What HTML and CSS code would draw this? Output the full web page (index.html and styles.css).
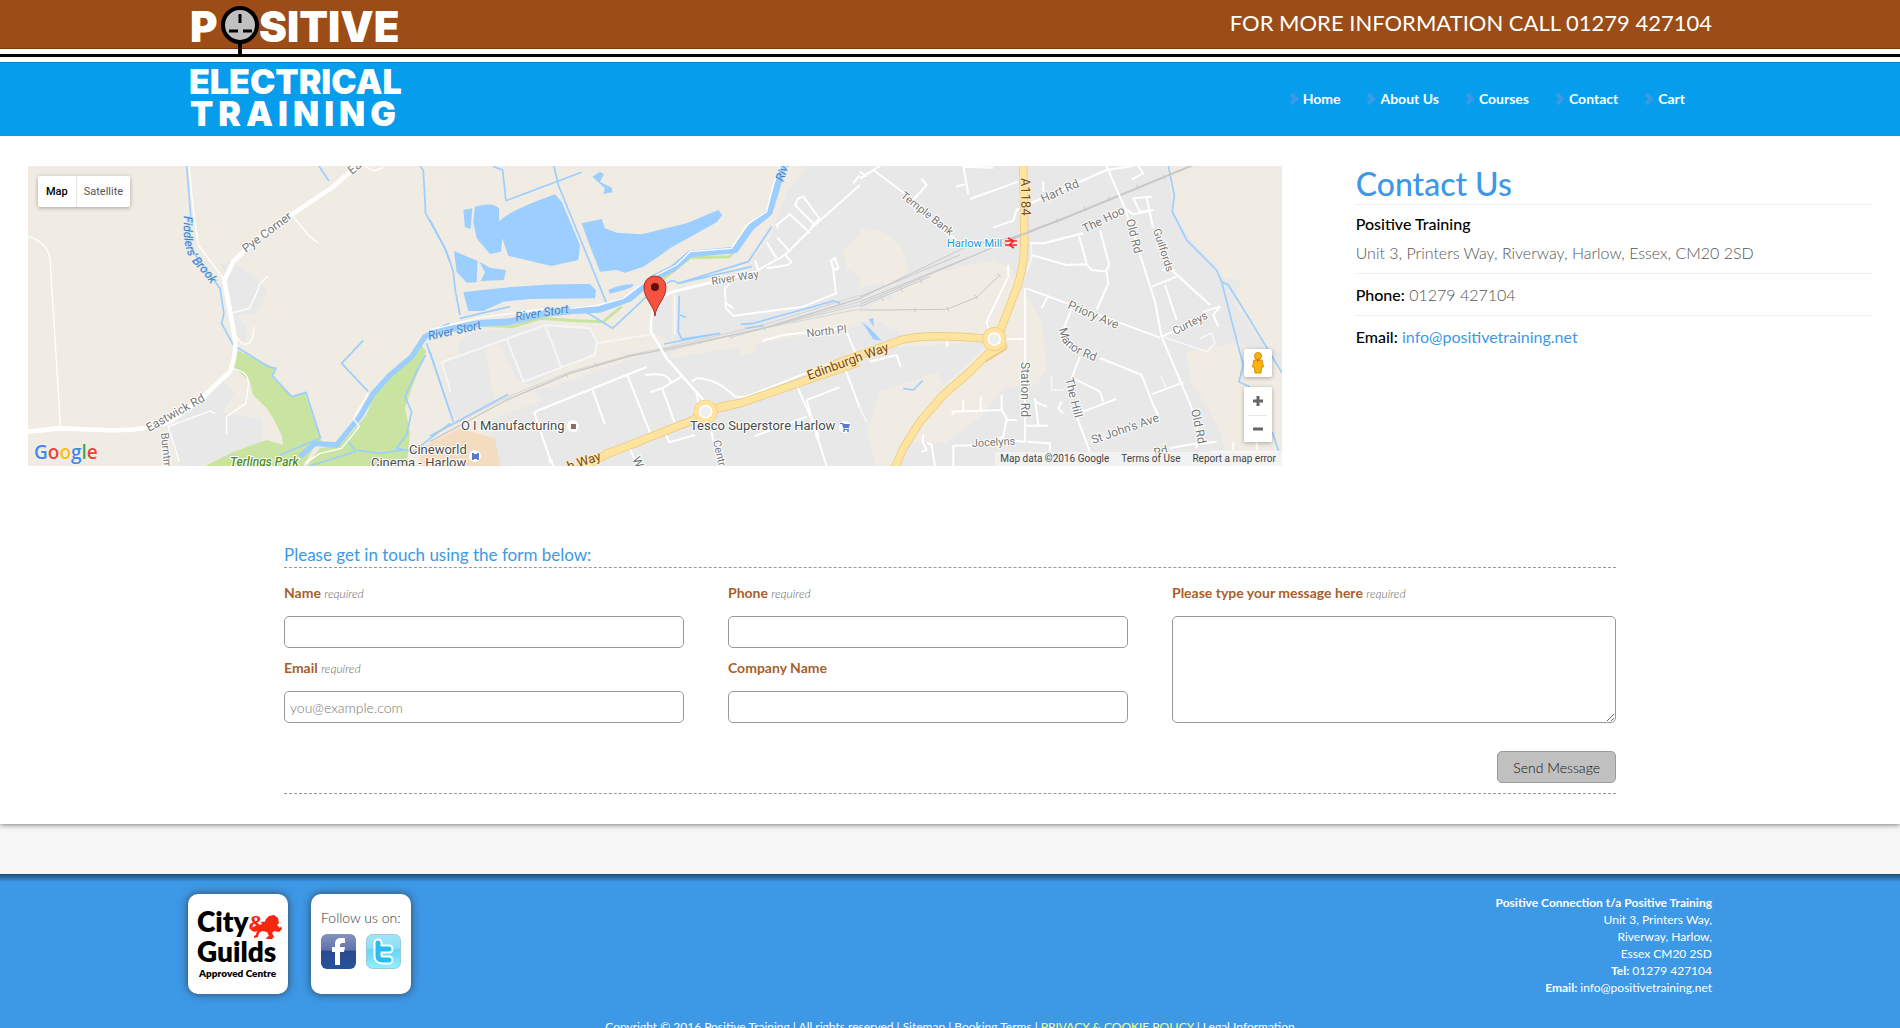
FILE: index.html
```html
<!DOCTYPE html>
<html lang="en">
<head>
<meta charset="utf-8">
<title>Contact Us | Positive Electrical Training</title>
<link rel="stylesheet" href="styles.css">
</head>
<body>
<header class="header">
  <div class="wrap header-inner">
    <a class="logo" href="#" aria-label="Positive Electrical Training">
      <svg width="220" height="136" viewBox="0 0 220 136">
        <g class="logo-text">
          <text x="2" y="42" font-size="42">P</text>
          <text x="71" y="42" font-size="42">SITIVE</text>
          <text x="1" y="94" font-size="34">ELECTRICAL</text>
          <text x="2" y="126" font-size="34" class="logo-spaced">TRAINING</text>
        </g>
        <path d="M52 40V56" stroke="#000" stroke-width="4"/>
        <circle cx="52" cy="25" r="17" fill="#c0c0c0" stroke="#000" stroke-width="4"/>
        <path d="M52 14v9M41 31h9M55 31h9" stroke="#000" stroke-width="3"/>
      </svg>
    </a>
    <div class="header-side">
      <p class="call">FOR MORE INFORMATION CALL 01279 427104</p>
      <nav class="nav">
        <a href="#"><svg class="chev" viewBox="0 0 10 14"><path d="M2 2l5 5-5 5"/></svg>Home</a>
        <a href="#"><svg class="chev" viewBox="0 0 10 14"><path d="M2 2l5 5-5 5"/></svg>About Us</a>
        <a href="#"><svg class="chev" viewBox="0 0 10 14"><path d="M2 2l5 5-5 5"/></svg>Courses</a>
        <a href="#"><svg class="chev" viewBox="0 0 10 14"><path d="M2 2l5 5-5 5"/></svg>Contact</a>
        <a href="#"><svg class="chev" viewBox="0 0 10 14"><path d="M2 2l5 5-5 5"/></svg>Cart</a>
      </nav>
    </div>
  </div>
</header>

<main class="main">
  <div class="top">
    <div class="map">
      <svg class="map-art" viewBox="0 0 1254 300" preserveAspectRatio="xMidYMid slice" aria-label="Map of Harlow">
        <rect width="1254" height="300" fill="#f0ece3"/>
        <defs>
          <path id="p-brook" d="M156 50C155 75 157 88 168 100C178 110 184 118 190 132"/>
          <path id="p-manor" d="M1031 163C1034 180 1040 186 1072 197"/>
        </defs>
        <!-- west -->
        <g transform="translate(-8 -11) scale(.333333)" fill="none" stroke-linejoin="round">
          <path fill="#e8e8e8" d="M605 330L625 318 700 360 745 410 705 480 650 480 680 520 680 560 650 560 640 480ZM450 815L550 740 610 675 645 712 610 770 700 790 725 790 730 860 640 890 540 933H480L450 850Z"/>
          <path fill="#c9e3a0" d="M650 585L765 640 755 665 815 725 855 715 905 860 880 880 850 933H555L640 890 740 855 790 870 785 840 760 790 740 760 700 720 690 680 635 630ZM860 933L900 880 960 870 1040 780 1070 700 1170 610 1205 570 1218 590 1175 700 1155 760 1170 830 1160 933Z"/>
          <path fill="#f3dcc0" d="M1225 900L1290 850V933H1210Z"/>
          <g stroke="#9cceff" stroke-width="5">
            <path d="M500 33L512 180 500 260 540 320 600 400 612 475 605 505 640 570 745 635 768 640 757 662 815 725 858 712 902 850M897 33L927 78M1200 33L1210 45 1217 175 1270 270 1290 320M1030 556L965 625 1045 710M1220 565L1290 770M1217 600L1185 660 1155 725 1175 770 1160 840 1130 880 1180 890 1290 805M780 900L900 850M985 860L1005 885 1080 895 1150 885M870 933L1005 890"/>
            <path stroke-width="16" d="M1290 510L1215 545 1175 605 1110 660 1060 715 1020 785 950 870 885 865 840 905"/>
          </g>
          <g stroke="#fff" stroke-width="4">
            <path d="M507 33L522 180 535 270 610 370M820 185L865 240 893 263M24 245Q80 260 90 310L122 820M640 473L688 460 712 410 718 388 745 362M650 545L665 565Q700 580 702 515M635 640Q690 650 685 690L678 745 620 785 620 838M445 815L570 768 585 775M445 815L478 920M1035 33L1060 48 1090 38M1290 610L1265 625 1285 700M1045 715L1000 790 1018 815 965 880 900 895 855 925" />
            <path stroke-width="14" d="M1010 33L940 95 820 175 700 260 640 320 613 375 645 550Q650 600 630 650L550 725 450 800Q370 830 250 825L120 820 24 830"/>
          </g>
        </g>
        <!-- centre -->
        <g transform="translate(402 -11) scale(.333333)" fill="none" stroke-linejoin="round">
          <path fill="#e8e8e8" d="M1135 33H1300V933H210L185 860 190 790 340 735 310 710 410 680 640 600 730 570 740 400 960 350 970 310 1020 250 1070 110ZM30 625L90 600 85 560 130 535 350 505 480 520 505 570 480 600 100 790 70 790ZM725 415L665 470 665 530 725 560Z"/>
          <path fill="#f0ece3" d="M165 580L205 568 265 680 310 690 195 745ZM1300 220L1240 290 1250 340 1300 370ZM920 560L970 550 980 590 935 600ZM740 570L900 545 1300 450V510L900 580 720 610Z"/>
          <path fill="#f3dcc0" d="M-30 933V880L90 820 195 850 210 933Z"/>
          <path stroke="#c9e3a0" stroke-width="9" d="M130 510L250 515 330 490 440 497 520 500 575 455M700 372L780 308 900 305 960 220 1020 170 1050 60"/>
          <g fill="#9cceff">
            <path d="M100 165L127 160 122 222 105 217ZM135 155Q190 140 207 160L208 200Q230 170 375 118L395 140 450 270 445 315 365 333 235 302 217 250 213 290 180 297 140 250 130 200ZM72 288L143 318 140 382 110 383 80 350ZM148 320L180 338 228 345 222 375 152 378 165 352ZM100 412Q300 385 480 387L498 405 495 430 300 432 220 440 160 468 115 468ZM455 205L515 192 525 220 560 233 635 238 770 205 865 165 877 180 860 202 720 280 700 295 640 335 585 353 560 345 510 350 475 260ZM487 65L510 50 522 58 510 80 545 98 548 112 520 117 525 100ZM535 405Q570 388 610 388 615 400 540 416Z"/>
          </g>
          <g stroke="#9cceff" stroke-width="5">
            <path d="M190 35L218 45 228 137 455 52M372 33L385 90 530 445M0 195L50 290 70 350 75 400 90 480M0 590L70 800M0 843L235 718M90 490L240 455M450 460L548 520 650 425M710 385Q730 370 745 385L955 320 1025 215M745 385L965 335M748 422L745 530 755 552 870 535M750 480L768 487M702 567L860 537M932 508L970 505 1210 438 1230 445M945 520L1000 512"/>
            <path stroke-width="20" d="M1060 33L1040 100 1018 172 965 215 915 285 780 297 730 340 670 370 600 430 510 463 430 467 350 475 240 500 150 505 0 535"/>
          </g>
          <path stroke="#fff" stroke-width="4" d="M1050 33L1030 90 1010 170 950 210 905 280 780 290 740 330 660 370 580 430 500 452 420 460M0 525L150 488 340 462"/>
          <g stroke="#c8c8c8">
            <path stroke-width="4" d="M0 860L230 735 420 655 600 603 720 580 1000 520 1290 430"/>
            <path stroke-width="2" d="M0 845L230 727 420 650 600 600 720 575 1000 510 1290 420M700 590L1290 450M900 548L1290 440M1000 520L1290 462M226 727l8 14M318 690l6 12M405 655l8 13M494 624l8 13M588 597l8 12M684 575l8 12M805 556l6 12M900 540l6 12M1000 515l6 12"/>
          </g>
          <g stroke="#f6f6f6" stroke-width="6"><path d="M62 710L35 622 345 510 480 520 500 560 495 600 280 680 230 550M345 510L393 635M500 565L665 538M735 420V540"/></g>
          <g stroke="#fff" stroke-width="6">
            <path d="M370 933L360 910 313 775 320 768 650 636M488 705L525 808M592 660L665 845M645 660Q720 650 722 685M660 712L700 698 755 665M697 700L738 815M785 680L800 670Q860 670 915 725L950 725 1290 590M800 710L805 745M708 840L718 862 795 840M600 880L620 930M845 830L850 860M1098 685L1165 840M1130 735L1228 697M1130 735L1162 845 1190 933M975 843L1130 785M998 557L1060 540 1245 520 1275 590M1290 90L1155 210 1065 300 985 345M975 315L985 345M1155 210L1095 150 1105 130 1120 125 1168 190 1145 215M1065 300L1085 320 1075 330 1010 340M1045 220L1040 210 1080 178 1140 235M1010 262L1040 310M1042 248L1080 290M910 460L890 445M1225 345L1210 340 1203 318 1215 308 1225 340 1210 345 1218 415 1120 455 910 482 888 460 885 400 900 385M1245 640L1290 760M1290 60L1270 85"/>
            <path stroke-width="8" d="M980 350L720 412 680 440Q660 480 663 530L710 610 825 740"/>
          </g>
          <circle cx="362" cy="918" r="7" fill="#fff"/><circle cx="1162" cy="843" r="7" fill="#fff"/>
          <g stroke-linecap="round">
            <path stroke="#ebcb85" stroke-width="25" d="M440 945L530 898 620 862 790 795 820 770 930 745 1140 672 1350 600M530 895L625 862M800 800L870 755 925 745"/>
            <path stroke="#ffe4a0" stroke-width="20" d="M440 945L530 898 620 862 790 795 820 770 930 745 1140 672 1350 600M530 895L625 862M800 800L870 755 925 745"/>
          </g>
          <circle cx="827" cy="770" r="24" stroke="#ebcb85" stroke-width="24"/>
          <circle cx="827" cy="770" r="24" stroke="#ffe4a0" stroke-width="20"/>
          <circle cx="827" cy="770" r="18" fill="#eee" stroke="#fff" stroke-width="5"/>
        </g>
        <!-- east -->
        <g transform="translate(832 -11) scale(.333333)" fill="none" stroke-linejoin="round">
          <path fill="#e8e8e8" d="M0 33H1270V933H0Z"/>
          <path fill="#f0ece3" d="M920 33H1270V600L1200 560 1120 440 1145 375 1080 370 1060 330 990 250 940 170ZM980 590L1140 560 1270 640V933H1110L1080 830 1040 750 990 680ZM0 220Q130 220 145 350L60 400 0 420ZM0 470L200 360 400 315 450 340 500 420 545 500 560 640 530 690 430 700 370 780 300 830 260 865 130 860 90 933H50L20 830 60 710 230 650 250 690 350 600 380 560 60 580 0 540Z"/>
          <path fill="#e8e8e8" d="M0 430L100 435 70 380 0 400ZM0 500L60 500 130 540 60 580 0 570Z"/>
          <g stroke="#9cceff" stroke-width="5">
            <path d="M925 33L943 120 937 170 980 255 1070 345 1085 380 1135 575 1150 630 1137 680 1170 695M1085 380L1105 390 1155 470 1270 660M1237 830L1260 900M130 700L160 705 188 677"/>
            <path fill="#9cceff" stroke="none" d="M5 500L30 520 65 557 40 553ZM25 492L40 490 42 515Z"/>
          </g>
          <g stroke="#c8c8c8" stroke-width="3">
            <path d="M0 430L330 270 470 245M0 440L480 245M0 448L380 285M0 455L210 365M0 425L300 300M0 465L70 465 260 463 350 427 420 360M60 420l10 18M120 395l8 16M180 372l6 14M165 458v14M260 455l6 14M345 420l8 12M412 356l12 10M588 190l6 14M672 154l6 14M745 125l6 14M830 90l6 14M910 58l6 14"/>
            <path stroke-width="6" d="M455 250L600 195 1000 30"/>
          </g>
          <g stroke="#fff" stroke-width="6">
            <path d="M0 70L60 33M40 45L140 120M0 50L20 65M260 235L290 255M155 140L200 90 185 72M310 33L325 118M288 95L315 88M310 35L400 38M330 132L475 80M550 110L550 80M400 217L460 197 470 165 500 150 740 45 820 33M740 33L795 160 850 330 885 440 905 545 1000 770 1015 840 1010 880M815 73L850 55 835 33M875 125L820 130 840 170 880 165M860 130L880 220M880 165L820 178 795 160M905 345L945 345M935 345L1050 450M875 395L950 365M915 390L950 495M1030 470L1080 455 1060 480 1075 515M905 545L1030 490M500 400L900 548M565 420L545 460M510 265L550 265 670 235M515 300L620 330 680 328 695 345 740 350 745 385 710 465M655 235L680 325M720 225L748 330 735 352M495 400V860M440 552H490M635 460L610 525M660 605L635 670M720 610L760 625 845 660 880 750 895 780M875 718L970 682M640 670L720 710 730 740M655 775L768 732M605 740L595 760 610 775M650 785L690 890M695 860L740 850M445 330V365L380 500 385 520M262 550V575M30 620L110 600 122 635M310 735V770M362 725V770M278 780L278 770 425 765 440 790 430 845 385 870 280 872 280 933M425 720V765M440 795H470M525 730L535 810M525 740L560 755M495 812L565 812M495 860L465 858M190 840L188 860 200 885 185 890M200 862L215 870 225 933M980 870L1070 860M930 880L980 870M1120 860V885M1190 860V885M500 860L570 865V890"/>
          </g>
          <g stroke="#f7f7f7" stroke-width="5"><path d="M910 545L1040 590 1065 565 1055 535 1020 550M900 660L920 700M575 665V705L610 705M0 760L20 800M515 265V310L500 350M1050 890L1260 890"/></g>
          <g stroke-linecap="round">
            <path stroke="#ebcb85" stroke-width="25" d="M490 20L493 250Q495 330 470 400L420 530M-70 625L120 556Q190 535 370 550M390 590L330 650 250 720 180 800 130 880 100 950M375 610L430 575"/>
            <path stroke="#ffe4a0" stroke-width="20" d="M490 20L493 250Q495 330 470 400L420 530M-70 625L120 556Q190 535 370 550M390 590L330 650 250 720 180 800 130 880 100 950M375 605L428 573"/>
          </g>
          <circle cx="403" cy="552" r="24" stroke="#ebcb85" stroke-width="24"/>
          <circle cx="403" cy="552" r="24" stroke="#ffe4a0" stroke-width="20"/>
          <circle cx="403" cy="552" r="18" fill="#eee" stroke="#fff" stroke-width="5"/>
          <path stroke="#c8c8c8" stroke-width="6" d="M455 250L520 227"/>
        </g>
        <g class="lbl">
          <text class="water"><textPath href="#p-brook">Fiddlers' Brook</textPath></text>
          <text class="water" transform="translate(401 174) rotate(-12)">River Stort</text>
          <text class="water" transform="translate(488 155) rotate(-9)">River Stort</text>
          <text class="water" transform="translate(755 16) rotate(-70)">River</text>
          <text transform="translate(218 87) rotate(-37)">Pye Corner</text>
          <text transform="translate(324 9) rotate(-40)">East</text>
          <text transform="translate(121 266) rotate(-29)">Eastwick Rd</text>
          <text class="small" transform="translate(133 267) rotate(85)">Burntmill</text>
          <text class="park" x="202" y="300">Terlings Park</text>
          <text class="small" transform="translate(684 119) rotate(-9)">River Way</text>
          <text class="small" transform="translate(779 171) rotate(-6)">North Pl</text>
          <text transform="translate(604 293) rotate(65)">West</text>
          <text class="small" transform="translate(685 275) rotate(77)">Central</text>
          <text class="small" transform="translate(872 31) rotate(38)">Temple Bank</text>
          <text transform="translate(1015 37) rotate(-24)">Hart Rd</text>
          <text transform="translate(1057 67) rotate(-26)">The Hoo</text>
          <text transform="translate(1098 54) rotate(76)">Old Rd</text>
          <text class="small" transform="translate(1125 64) rotate(72)">Guilfords</text>
          <text transform="translate(1039 142) rotate(23)">Priory Ave</text>
          <text><textPath href="#p-manor">Manor Rd</textPath></text>
          <text class="small" transform="translate(1147 169) rotate(-27)">Curteys</text>
          <text transform="translate(993 196) rotate(90)">Station Rd</text>
          <text transform="translate(1037 213) rotate(76)">The Hill</text>
          <text transform="translate(1065 278) rotate(-19)">St John's Ave</text>
          <text transform="translate(1163 244) rotate(78)">Old Rd</text>
          <text class="small" transform="translate(944 281) rotate(-3)">Jocelyns</text>
          <text transform="translate(1127 291) rotate(-15)">Rd</text>
          <text class="main-road" transform="translate(781 214) rotate(-20)">Edinburgh Way</text>
          <text class="main-road" transform="translate(541 305) rotate(-19)">h Way</text>
          <text class="main-road" transform="translate(993 12) rotate(89)">A1184</text>
          <text class="rail" x="919" y="81">Harlow Mill</text>
          <text class="poi" x="433" y="264">O I Manufacturing</text>
          <text class="poi" x="662" y="264">Tesco Superstore Harlow</text>
          <text class="poi" x="381" y="288">Cineworld</text>
          <text class="poi" x="343" y="301">Cinema - Harlow</text>
        </g>
        <g fill="#fff"><circle cx="545" cy="260" r="6"/><circle cx="817" cy="261" r="6"/><circle cx="447" cy="290" r="6"/></g>
        <path fill="#8d6e63" d="M543 258h5v5h-5z"/>
        <path fill="#5b7bd0" d="M812 257h3l1 1h6l-1 4h-5l1 1h4v1h-5l-2-6h-2z"/><circle cx="816" cy="265" r="1" fill="#5b7bd0"/><circle cx="820" cy="265" r="1" fill="#5b7bd0"/>
        <path fill="#5b7bd0" d="M444 287h2v1h3v-1h2v7h-2v-1h-3v1h-2z"/>
        <path fill="none" stroke="#f22" stroke-width="1.5" d="M977 75h12M977 79h12M980 72l6 3-5 4 5 3"/>
        <!-- marker -->
        <path d="M627 150C626 139 616 133 616 121A11 11 0 0 1 638 121C638 133 628 139 627 150Z" fill="#f5523f" stroke="#a83226"/>
        <circle cx="627" cy="121" r="4" fill="#5c0f0b"/>
      </svg>
      <div class="map-types"><button type="button" class="on">Map</button><button type="button">Satellite</button></div>
      <div class="google" aria-label="Google"><span class="b">G</span><span class="r">o</span><span class="y">o</span><span class="b">g</span><span class="g">l</span><span class="r">e</span></div>
      <div class="map-tools">
        <button type="button" class="tool" aria-label="Street View">
          <svg width="14" height="22" viewBox="0 0 14 22"><circle cx="7" cy="4" r="3.5" fill="#fbb40a" stroke="#d98d0b"/><path d="M3 8h8l1.500 7h-2l-.5 6H4l-.5-6h-2z" fill="#fbb40a" stroke="#d98d0b"/><path d="M5 7.500h4L7 10z" fill="#e0661a"/></svg>
        </button>
        <div class="zoom">
          <button type="button" aria-label="Zoom in"><svg width="12" height="12" viewBox="0 0 12 12"><path d="M1 6h10M6 1v10"/></svg></button>
          <button type="button" aria-label="Zoom out"><svg width="12" height="12" viewBox="0 0 12 12"><path d="M1 6h10"/></svg></button>
        </div>
      </div>
      <div class="map-legal"><span>Map data ©2016 Google</span><a href="#">Terms of Use</a><a href="#">Report a map error</a></div>
    </div>
    <section class="contact">
      <h1>Contact Us</h1>
      <div class="contact-row">
        <h2>Positive Training</h2>
        <p>Unit 3, Printers Way, Riverway, Harlow, Essex, CM20 2SD</p>
      </div>
      <p class="contact-row"><strong>Phone:</strong> 01279 427104</p>
      <p class="contact-row"><strong>Email:</strong> <a href="#">info@positivetraining.net</a></p>
    </section>
  </div>

  <form class="form">
    <h3>Please get in touch using the form below:</h3>
    <div class="fields">
      <div class="field"><label for="name">Name <em>required</em></label><input id="name" type="text"></div>
      <div class="field"><label for="phone">Phone <em>required</em></label><input id="phone" type="tel"></div>
      <div class="field message"><label for="msg">Please type your message here <em>required</em></label><textarea id="msg"></textarea></div>
      <div class="field"><label for="email">Email <em>required</em></label><input id="email" type="email" placeholder="you@example.com"></div>
      <div class="field"><label for="company">Company Name</label><input id="company" type="text"></div>
    </div>
    <div class="actions"><button class="send" type="submit">Send Message</button></div>
  </form>
</main>

<footer class="footer">
  <div class="wrap footer-inner">
    <div class="cards">
      <div class="card">
        <svg width="100" height="100" viewBox="0 0 100 100">
          <g class="cg">
            <text x="9" y="38" font-size="28">City</text>
            <text x="9" y="68" font-size="28">Guilds</text>
            <text x="11" y="83" font-size="10">Approved Centre</text>
            <text x="60" y="37" font-size="24" class="amp">&amp;</text>
          </g>
          <path fill="#f8260c" d="M78 25l3-3 5-1 4 3 1 5-2 2 3 3 1-2 1 3-3 3-5-1-2 2 2 4 -2 2h-6l1-2 2-1-2-4-5-1-3 2-1 4-4 1v-2l2-1 1-5-2 2-3-1 1-4 5-2 6-1z"/>
        </svg>
      </div>
      <div class="card follow">
        <p>Follow us on:</p>
        <div class="social">
          <a href="#" aria-label="Facebook"><svg width="35" height="35" viewBox="0 0 35 35">
            <defs><linearGradient id="fb" x1="0" y1="0" x2="0" y2="1"><stop offset="0" stop-color="#8492bd"/><stop offset=".45" stop-color="#6073ab"/><stop offset=".5" stop-color="#2b4a8e"/><stop offset="1" stop-color="#27529c"/></linearGradient></defs>
            <rect width="35" height="35" rx="6" fill="url(#fb)"/>
            <path fill="#fff" d="M14 31V18h-3v-5h3v-3c0-4 2-6 6-6h4v5h-3c-1 0-2 1-2 2v2h5l-1 5h-4v13z"/></svg></a>
          <a href="#" aria-label="Twitter"><svg width="35" height="35" viewBox="0 0 35 35">
            <defs><linearGradient id="tw" x1="0" y1="0" x2="0" y2="1"><stop offset="0" stop-color="#a4e4f8"/><stop offset=".4" stop-color="#8cdff8"/><stop offset=".45" stop-color="#65d4f7"/><stop offset="1" stop-color="#8ff0ff"/></linearGradient></defs>
            <rect x=".5" y=".5" width="34" height="34" rx="6" fill="url(#tw)" stroke="#9bc9dc"/>
            <path d="M12 9v13q0 4 5 4h6M12 15h11" fill="none" stroke="#fff" stroke-width="9" stroke-linecap="round"/>
            <path d="M12 9v13q0 4 5 4h6M12 15h11" fill="none" stroke="#28bdee" stroke-width="5" stroke-linecap="round"/></svg></a>
        </div>
      </div>
    </div>
    <address class="address">
      <strong>Positive Connection t/a Positive Training</strong><br>
      Unit 3, Printers Way,<br>Riverway, Harlow,<br>Essex CM20 2SD<br>
      <strong>Tel:</strong> 01279 427104<br>
      <strong>Email:</strong> info@positivetraining.net
    </address>
  </div>
  <p class="copy">Copyright © 2016 Positive Training | All rights reserved | <a href="#">Sitemap</a> | <a href="#">Booking Terms</a> | <a class="policy" href="#">PRIVACY &amp; COOKIE POLICY</a> | <a href="#">Legal Information</a></p>
</footer>
</body>
</html>
```
FILE: styles.css
```css
* { box-sizing: border-box; }
body { margin: 0; background: #f7f7f7; font-family: Lato, "Liberation Sans", sans-serif; font-weight: 300; font-size: 16px; color: #555; }
p, h1, h2, h3 { margin: 0; }
a { color: inherit; text-decoration: none; }
button, input, textarea { font-family: inherit; }

.wrap { width: calc(100% - 48px); max-width: 1524px; margin: 0 auto; }

.header {
  position: relative;
  z-index: 1;
  background: linear-gradient(#9b4c17 0 48px, #7f3505 48px 49px, #fff 49px 54px, #000 54px 57px, #fff 57px 62px, #0586d0 62px 63px, #059dec 63px);
}
.header-inner { display: flex; justify-content: space-between; }
.logo { flex: none; height: 136px; }
.logo svg { display: block; }
.logo-text { font-family: Inter, sans-serif; font-weight: 900; fill: #fff; }
.logo-spaced { letter-spacing: 5px; }
.header-side { display: flex; flex-direction: column; align-items: flex-end; color: #fff; }
.call { height: 62px; font-size: 22px; font-weight: 400; line-height: 46px; }
.nav { display: flex; gap: 26px; padding-right: 27px; font-size: 14px; font-weight: 700; line-height: 74px; }
.nav a { display: flex; align-items: center; gap: 4px; }
.chev { width: 10px; height: 14px; fill: none; stroke: #3d98e6; stroke-width: 4; }

.main { background: #fff; padding: 30px 28px; box-shadow: 0 0 6px #555; }
.top { display: grid; grid-template-columns: 68fr 4fr 28fr; }
.map { position: relative; height: 300px; overflow: hidden; background: #e8e8e8; font-family: Roboto, sans-serif; }
.map-art { display: block; width: 100%; height: 100%; }
.lbl { font-size: 12px; font-weight: 400; fill: #777; stroke: #fff; stroke-width: 2px; paint-order: stroke; stroke-linejoin: round; }
.lbl .small { font-size: 11px; }
.lbl .water { fill: #3f80c4; font-style: italic; stroke: #c4e0fb; stroke-width: 1px; }
.lbl .park { fill: #4e8c1d; font-style: italic; font-weight: 500; }
.lbl .main-road { fill: #7d4a0e; font-size: 13px; stroke: #ffecbd; }
.lbl .rail { fill: #1a98d5; font-size: 11px; }
.lbl .poi { fill: #4b4b4b; font-size: 13px; }
.map-types { position: absolute; left: 10px; top: 10px; display: flex; border-radius: 2px; background: #fff; box-shadow: 0 1px 4px rgba(0,0,0,.3); }
.map-types button { height: 31px; padding: 0 8px; border: 0; background: none; font-size: 11px; color: #565656; }
.map-types button + button { padding: 0 7px; border-left: 1px solid #e6e6e6; }
.map-types .on { font-weight: 500; color: #000; }
.google { position: absolute; left: 6px; bottom: 2px; font: 600 19px/24px "Open Sans", sans-serif; text-shadow: 0 0 2px #fff; }
.google .b { color: #4285f4; }
.google .r { color: #ea4335; }
.google .y { color: #fbbc05; }
.google .g { color: #34a853; }
.map-tools { position: absolute; right: 10px; bottom: 24px; display: flex; flex-direction: column; gap: 10px; }
.map-tools button { display: flex; align-items: center; justify-content: center; width: 28px; height: 28px; padding: 0; border: 0; background: #fff; }
.map-tools .tool, .zoom { border-radius: 2px; background: #fff; box-shadow: 0 1px 4px rgba(0,0,0,.3); }
.zoom { overflow: hidden; }
.map-tools .zoom button + button { height: 27px; background: linear-gradient(#e6e6e6 1px, #fff 1px) center / 19px 100% no-repeat #fff; }
.zoom svg { stroke: #666; stroke-width: 3; }
.map-legal { position: absolute; right: 0; bottom: 0; display: flex; gap: 12px; padding: 0 6px 0 5px; background: rgba(245,245,245,.75); font-size: 10px; font-weight: 400; line-height: 14px; color: #444; }

.contact { grid-column: 3; line-height: 24px; }
.contact h1 { padding-bottom: 3px; font-size: 32px; font-weight: 500; line-height: 35px; color: #3d98e6; border-bottom: 1px solid #eee; }
.contact h2 { padding-bottom: 5px; font-size: 16px; font-weight: 500; line-height: 24px; color: #000; }
.contact-row { padding: 7px 0 8px; border-bottom: 1px solid #eee; }
.contact-row + .contact-row { padding: 9px 0 8px; }
.contact-row:last-child { border: 0; }
.contact strong { font-weight: 500; color: #000; }
.contact a { font-weight: 400; color: #3d98e6; }

.form { max-width: 1332px; margin: 76px auto 0; border-bottom: 1px dashed #999; padding-bottom: 10px; }
.form h3 { height: 26px; font-size: 17px; font-weight: 400; line-height: 25px; color: #3d98e6; border-bottom: 1px dashed #999; }
.fields { display: grid; grid-template-columns: repeat(3, 1fr); padding-top: 15px; }
.field { display: flex; flex-direction: column; height: 75px; }
.field label { font-size: 14px; font-weight: 700; line-height: 20px; color: #a85f2c; padding-bottom: 13px; }
.field em { font-size: 12px; font-weight: 300; line-height: 1; color: #666; }
.field input, .field textarea { width: 90%; border: 1px solid #999; border-radius: 5px; background: #fff; font-size: 14px; font-weight: 300; padding: 0 5px; }
.field input { height: 32px; }
.field input::placeholder { color: #777; opacity: 1; }
.message { grid-column: 3; grid-row: 1 / span 2; height: auto; }
.field textarea { width: 100%; height: 107px; }
.actions { display: flex; justify-content: flex-end; padding-top: 18px; }
.send { height: 32px; padding: 0 15px; border: 1px solid #999; border-radius: 5px; background: #c0c0c0; font-size: 14px; font-weight: 300; color: #111; }

.footer { margin-top: 50px; color: #fff; background: linear-gradient(#1f4e79, #3d98e6 8px); }
.footer-inner { display: flex; justify-content: space-between; padding-top: 20px; }
.cards { display: flex; gap: 23px; }
.card { width: 100px; height: 100px; border-radius: 10px; background: #fff; box-shadow: 0 0 8px #345; }
.card svg { display: block; }
.cg { font-family: Lato, sans-serif; font-weight: 800; fill: #000; }
.cg .amp { fill: #f8260c; font-family: "Liberation Serif", serif; font-weight: 700; }
.follow { padding: 14px 10px 0; color: #333; font-size: 14px; line-height: 20px; }
.social { display: flex; gap: 10px; padding-top: 6px; }
.address { font-style: normal; font-weight: 400; font-size: 12px; line-height: 17px; text-align: right; }
.copy { padding: 22px 0 20px; text-align: center; font-size: 12px; font-weight: 400; line-height: 17px; }
.policy { color: #ffff80; }
```
